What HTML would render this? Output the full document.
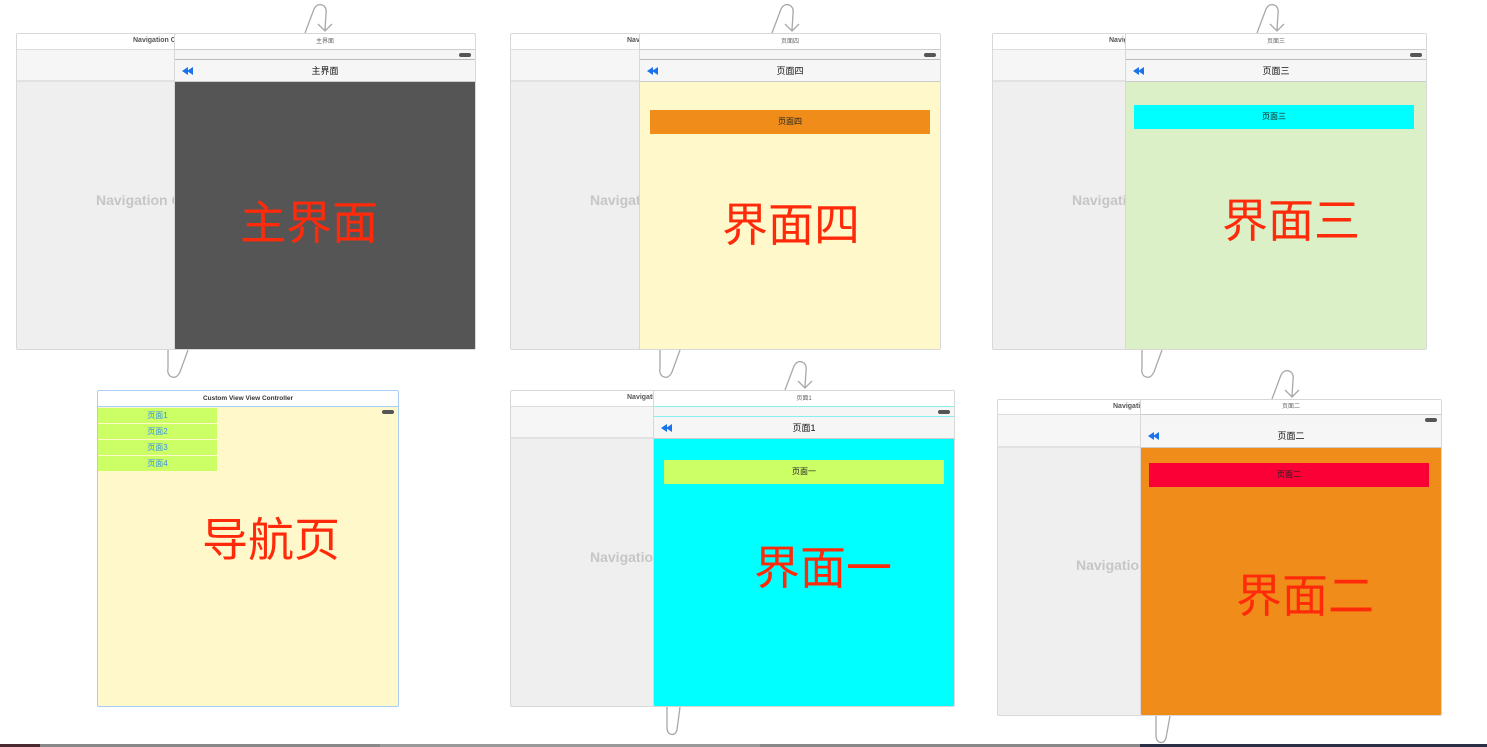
<!DOCTYPE html>
<html><head><meta charset="utf-8"><style>
*{margin:0;padding:0;box-sizing:border-box}
body{width:1487px;height:747px;background:#fff;position:relative;overflow:hidden;font-family:"Liberation Sans","Noto Sans CJK SC",sans-serif}
.a{position:absolute}
.nav{position:absolute;background:#efefef;border:1px solid #d8d8d8;border-radius:2px;overflow:hidden}
.nav .t{position:absolute;left:0;right:0;top:0;height:16px;background:#fff;border-bottom:1px solid #ddd}
.nav .s{position:absolute;left:0;right:0;top:16px;height:32px;background:#f6f6f6;border-bottom:2px solid #e2e2e2}
.ntxt{position:absolute;font-size:7px;font-weight:bold;color:#555;white-space:nowrap}
.gtxt{position:absolute;font-size:14px;font-weight:bold;color:#c6c6c6;white-space:nowrap}
.vc{position:absolute;border:1px solid #d8d8d8;border-radius:2px;overflow:hidden}
.vc .t{position:absolute;left:0;right:0;top:0;height:16px;background:#fff;border-bottom:1px solid #ccc;font-size:6px;color:#666;text-align:center;line-height:16px}
.vc .s{position:absolute;left:0;right:0;top:16px;height:10px;background:#f5f5f5;border-bottom:1px solid #bbb}
.bat{position:absolute;right:4px;top:3px;width:12px;height:4px;background:#555;border-radius:2px}
.vc .n{position:absolute;left:0;right:0;top:26px;height:22px;background:#f6f6f6;border-bottom:1px solid #ccc;font-size:9px;color:#111;text-align:center;line-height:22px}
.back{position:absolute;left:7px;top:7px;width:0;height:0;border-top:4px solid transparent;border-bottom:4px solid transparent;border-right:6px solid #1a73e8}
.back2{left:12px}
.c{position:absolute;left:0;right:0;top:48px;bottom:0}
.btn{position:absolute;font-size:8px;color:#222;text-align:center;line-height:24px;height:24px}
.big{position:absolute;font-size:46px;color:#ff2a0a;white-space:nowrap;font-family:"Noto Sans CJK SC",sans-serif;transform:translate(-50%,-50%)}
</style></head><body>

<!-- Scene 1 -->
<div class="nav" style="left:16px;top:33px;width:200px;height:317px"><div class="t"></div><div class="s"></div></div>
<div class="ntxt" style="left:133px;top:37px">Navigation Controller</div>
<div class="gtxt" style="left:96px;top:192px">Navigation Controller</div>
<div class="vc" style="left:174px;top:33px;width:302px;height:317px;background:#555">
<div class="t">主界面</div><div class="s"><div class="bat"></div></div>
<div class="n"><div class="back"></div><div class="back back2"></div>主界面</div>
<div class="c" style="background:#555"></div></div>
<div class="big" style="left:309px;top:220px">主界面</div>

<!-- Scene 2 -->
<div class="nav" style="left:510px;top:33px;width:200px;height:317px"><div class="t"></div><div class="s"></div></div>
<div class="ntxt" style="left:627px;top:37px">Navigation Controller</div>
<div class="gtxt" style="left:590px;top:192px">Navigation Controller</div>
<div class="vc" style="left:639px;top:33px;width:302px;height:317px">
<div class="t">页面四</div><div class="s"><div class="bat"></div></div>
<div class="n"><div class="back"></div><div class="back back2"></div>页面四</div>
<div class="c" style="background:#fff8cb"><div class="btn" style="left:10px;top:28px;width:280px;background:#f08d1a">页面四</div></div></div>
<div class="big" style="left:791px;top:222px">界面四</div>

<!-- Scene 3 -->
<div class="nav" style="left:992px;top:33px;width:200px;height:317px"><div class="t"></div><div class="s"></div></div>
<div class="ntxt" style="left:1109px;top:37px">Navigation Controller</div>
<div class="gtxt" style="left:1072px;top:192px">Navigation Controller</div>
<div class="vc" style="left:1125px;top:33px;width:302px;height:317px">
<div class="t">页面三</div><div class="s"><div class="bat"></div></div>
<div class="n"><div class="back"></div><div class="back back2"></div>页面三</div>
<div class="c" style="background:#dbf0c6"><div class="btn" style="left:8px;top:23px;width:280px;background:#00ffff">页面三</div></div></div>
<div class="big" style="left:1291px;top:218px">界面三</div>

<!-- Scene 4 -->
<div class="vc" style="left:97px;top:390px;width:302px;height:317px;border-color:#a9cdf5;background:#fff8cb">
<div class="t" style="font-size:6.5px;font-weight:bold;color:#333;border-color:#a9cdf5">Custom View View Controller</div>
<div class="bat" style="top:19px"></div>
<div class="btn" style="left:0;top:17px;width:119px;height:15px;line-height:15px;background:#ccff66;color:#3a8fe0">页面1</div>
<div class="btn" style="left:0;top:33px;width:119px;height:15px;line-height:15px;background:#ccff66;color:#3a8fe0">页面2</div>
<div class="btn" style="left:0;top:49px;width:119px;height:15px;line-height:15px;background:#ccff66;color:#3a8fe0">页面3</div>
<div class="btn" style="left:0;top:65px;width:119px;height:15px;line-height:15px;background:#ccff66;color:#3a8fe0">页面4</div>
</div>
<div class="big" style="left:271px;top:537px">导航页</div>

<!-- Scene 5 -->
<div class="nav" style="left:510px;top:390px;width:200px;height:317px"><div class="t"></div><div class="s"></div></div>
<div class="ntxt" style="left:627px;top:394px">Navigation Controller</div>
<div class="gtxt" style="left:590px;top:549px">Navigation Controller</div>
<div class="vc" style="left:653px;top:390px;width:302px;height:317px">
<div class="t" style="border-color:#8ee">页面1</div><div class="s" style="border-color:#8ee"><div class="bat"></div></div>
<div class="n"><div class="back"></div><div class="back back2"></div>页面1</div>
<div class="c" style="background:#00ffff"><div class="btn" style="left:10px;top:21px;width:280px;background:#ccff66">页面一</div></div></div>
<div class="big" style="left:823px;top:565px">界面一</div>

<!-- Scene 6 -->
<div class="nav" style="left:997px;top:399px;width:200px;height:317px"><div class="t" style="height:15px"></div><div class="s" style="top:15px;height:33px"></div></div>
<div class="ntxt" style="left:1113px;top:403px">Navigation Controller</div>
<div class="gtxt" style="left:1076px;top:557px">Navigation Controller</div>
<div class="vc" style="left:1140px;top:399px;width:302px;height:317px">
<div class="t" style="height:15px;line-height:15px">页面二</div><div class="s" style="top:15px;border:none;height:11px"><div class="bat"></div></div>
<div class="n" style="top:24px;height:24px;line-height:24px"><div class="back" style="top:8px"></div><div class="back back2" style="top:8px"></div>页面二</div>
<div class="c" style="background:#f08d1a"><div class="btn" style="left:8px;top:15px;width:280px;background:#fb0036">页面二</div></div></div>
<div class="big" style="left:1305px;top:593px">界面二</div>

<!-- segues -->
<svg class="a" style="left:0;top:0" width="1487" height="747" fill="none" stroke="#a8a8a8" stroke-width="1.3">
<path d="M305 33 L314 9 Q318 2 324 6 Q327 9 326 14 L325 30 M318 24 L325 31 L332 24"/>
<path d="M772 33 L781 9 Q785 2 791 6 Q794 9 793 14 L792 30 M785 24 L792 31 L799 24"/>
<path d="M1257 33 L1266 9 Q1270 2 1276 6 Q1279 9 1278 14 L1277 30 M1270 24 L1277 31 L1284 24"/>
<path d="M785 390 L794 366 Q798 359 804 363 Q807 366 806 371 L805 387 M798 381 L805 388 L812 381"/>
<path d="M1272 399 L1281 375 Q1285 368 1291 372 Q1294 375 1293 380 L1292 396 M1285 390 L1292 397 L1299 390"/>
<path d="M188 350 L180 372 Q176 380 170 376 Q167 373 168 368 L168 350"/>
<path d="M680 350 L672 372 Q668 380 662 376 Q659 373 660 368 L660 350"/>
<path d="M1162 350 L1154 372 Q1150 380 1144 376 Q1141 373 1142 368 L1142 350"/>
<path d="M680 707 L677 730 Q675 736 670 734 Q667 732 667 728 L667 707"/>
<path d="M1170 716 L1166 738 Q1164 744 1159 742 Q1156 740 1156 736 L1156 716"/>
</svg>

<div class="a" style="left:0;top:744px;width:40px;height:3px;background:#4a2a30"></div>
<div class="a" style="left:40px;top:744px;width:340px;height:3px;background:#888"></div>
<div class="a" style="left:380px;top:744px;width:380px;height:3px;background:#999"></div>
<div class="a" style="left:760px;top:744px;width:380px;height:3px;background:#888"></div>
<div class="a" style="left:1140px;top:744px;width:347px;height:3px;background:#2a2f45"></div>
</body></html>
